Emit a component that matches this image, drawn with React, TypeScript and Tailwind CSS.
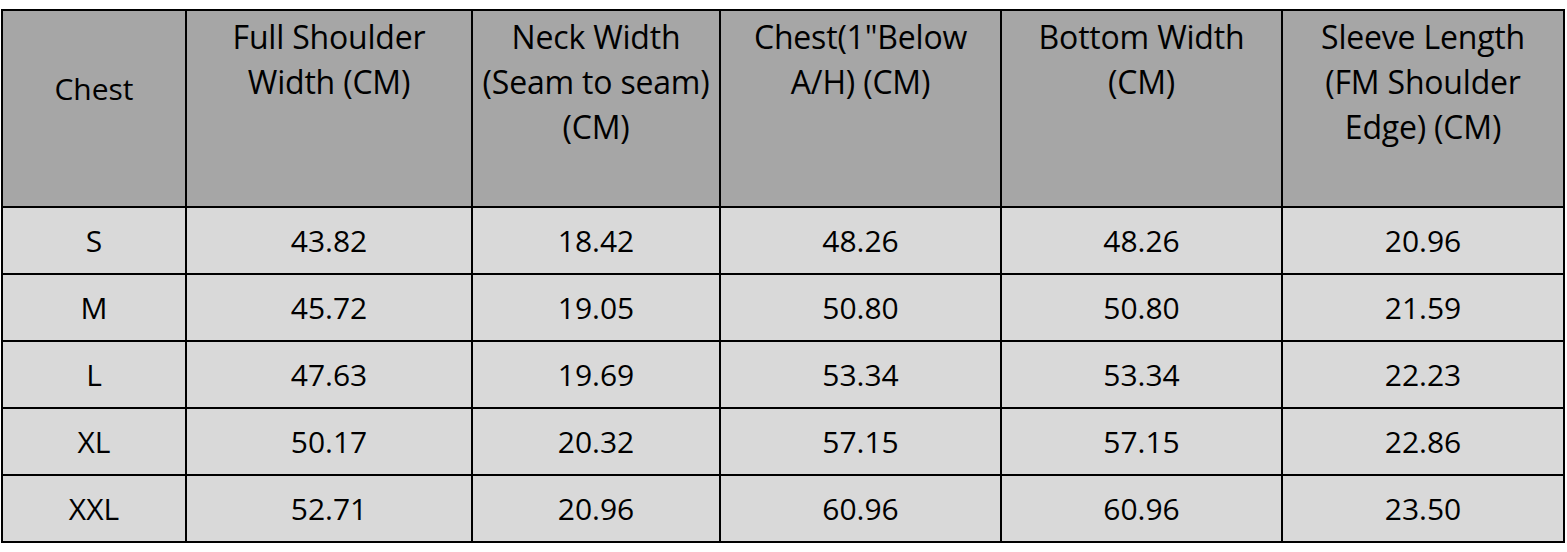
const headers: React.ReactNode[] = [
    'Chest',
    <>Full Shoulder<br />Width (CM)</>,
    <>Neck Width<br />(Seam to seam)<br />(CM)</>,
    <>Chest(1"Below<br />A/H) (CM)</>,
    <>Bottom Width<br />(CM)</>,
    <>Sleeve Length<br />(FM Shoulder<br />Edge) (CM)</>,
]

const rows = [
    ['S', '43.82', '18.42', '48.26', '48.26', '20.96'],
    ['M', '45.72', '19.05', '50.80', '50.80', '21.59'],
    ['L', '47.63', '19.69', '53.34', '53.34', '22.23'],
    ['XL', '50.17', '20.32', '57.15', '57.15', '22.86'],
    ['XXL', '52.71', '20.96', '60.96', '60.96', '23.50'],
]

const App = () => {
    return (
        <div className="w-[1567px] h-[552px] bg-white pt-[9px] pl-[1px] font-['Open_Sans',sans-serif] text-[30px] text-black">
            <div className="w-[1564px] bg-black p-[2px] grid grid-cols-[182px_284px_246px_279px_279px_280px] grid-rows-[195px_repeat(5,65px)] gap-[2px]">
                {headers.map((h, i) => (
                    <div
                        key={i}
                        className={`bg-[#a6a6a6] text-center leading-[45px] ${i === 0 ? 'pt-[55px] text-[30px]' : 'pt-[3px] text-[32px] tracking-[-0.2px]'}`}
                    >
                        {h}
                    </div>
                ))}
                {rows.map((row) =>
                    row.map((cell, j) => (
                        <div
                            key={row[0] + j}
                            className="bg-[#d9d9d9] flex items-center justify-center"
                        >
                            {cell}
                        </div>
                    )),
                )}
            </div>
        </div>
    )
}

export default App
